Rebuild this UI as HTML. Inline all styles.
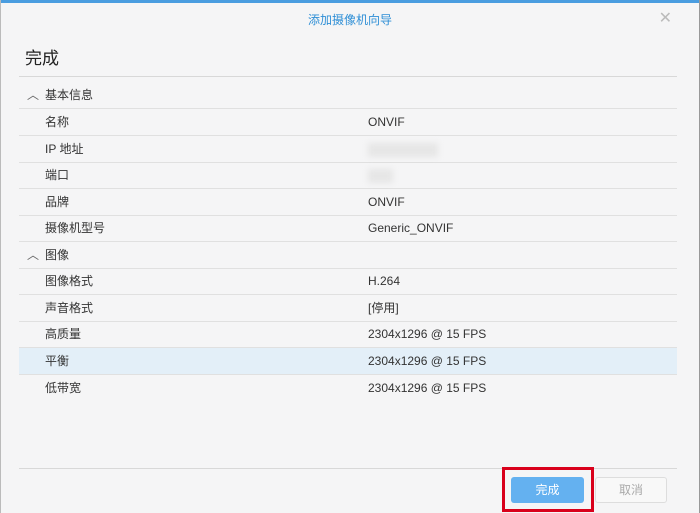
<!DOCTYPE html>
<html><head><meta charset="utf-8"><style>
*{margin:0;padding:0;box-sizing:border-box}
body{width:700px;height:513px;background:#f5f5f6;font-family:"Liberation Sans","Noto Sans CJK SC",sans-serif;position:relative;overflow:hidden;color:#333}
.top{position:absolute;left:0;top:0;width:700px;height:3px;background:#4a9de0}
.rb{position:absolute;right:0;top:0;width:1px;height:513px;background:#999}
.lb{position:absolute;left:0;top:0;width:1px;height:513px;background:#bbb}
.title{position:absolute;top:11px;left:0;width:700px;text-align:center;font-size:12px;color:#2f8fd6}
.x{position:absolute;right:28px;top:8px;font-size:16px;color:#bbb}
.h{position:absolute;left:25px;top:44px;font-size:17px;color:#222}
.hl{position:absolute;left:19px;top:76px;width:658px;height:1px;background:#d8d8d8}
.row{position:absolute;left:19px;width:658px;height:27px;border-bottom:1px solid #e0e0e0;font-size:12px;line-height:27px}
.row .k{position:absolute;left:26px}
.row .v{position:absolute;left:349px}
.sec .k{left:26px}
.sec .c{position:absolute;left:8px;top:0;color:#666}
.blur{display:inline-block;width:70px;height:14px;background:#e6e6e6;filter:blur(3px);vertical-align:middle}
.bl{position:absolute;left:19px;top:468px;width:658px;height:1px;background:#d8d8d8}
.b1{position:absolute;left:511px;top:477px;width:73px;height:26px;background:#64b1f0;border-radius:3px;color:#fff;font-size:12px;text-align:center;line-height:26px}
.b2{position:absolute;left:595px;top:477px;width:72px;height:26px;background:#f8f8f8;border:1px solid #ddd;border-radius:3px;color:#aaa;font-size:12px;text-align:center;line-height:24px}
.red{position:absolute;left:502px;top:467px;width:92px;height:45px;border:3px solid #d9001b}
</style></head><body>
<div class="top"></div><div class="lb"></div><div class="rb"></div>
<div class="title">添加摄像机向导</div>
<div class="x">✕</div>
<div class="h">完成</div>
<div class="hl"></div>
<div class="row sec" style="top:82px"><span class="c">︿</span><span class="k">基本信息</span></div>
<div class="row" style="top:109px"><span class="k">名称</span><span class="v">ONVIF</span></div>
<div class="row" style="top:136px"><span class="k">IP 地址</span><span class="v"><span class="blur"></span></span></div>
<div class="row" style="top:162px"><span class="k">端口</span><span class="v"><span class="blur" style="width:25px"></span></span></div>
<div class="row" style="top:189px"><span class="k">品牌</span><span class="v">ONVIF</span></div>
<div class="row" style="top:215px"><span class="k">摄像机型号</span><span class="v">Generic_ONVIF</span></div>
<div class="row sec" style="top:242px"><span class="c">︿</span><span class="k">图像</span></div>
<div class="row" style="top:268px"><span class="k">图像格式</span><span class="v">H.264</span></div>
<div class="row" style="top:295px"><span class="k">声音格式</span><span class="v">[停用]</span></div>
<div class="row" style="top:321px"><span class="k">高质量</span><span class="v">2304x1296 @ 15 FPS</span></div>
<div class="row" style="top:348px;background:#e3eff8"><span class="k">平衡</span><span class="v">2304x1296 @ 15 FPS</span></div>
<div class="row" style="top:375px;border-bottom:none"><span class="k">低带宽</span><span class="v">2304x1296 @ 15 FPS</span></div>
<div class="bl"></div>
<div class="b1">完成</div>
<div class="b2">取消</div>
<div class="red"></div>
</body></html>
